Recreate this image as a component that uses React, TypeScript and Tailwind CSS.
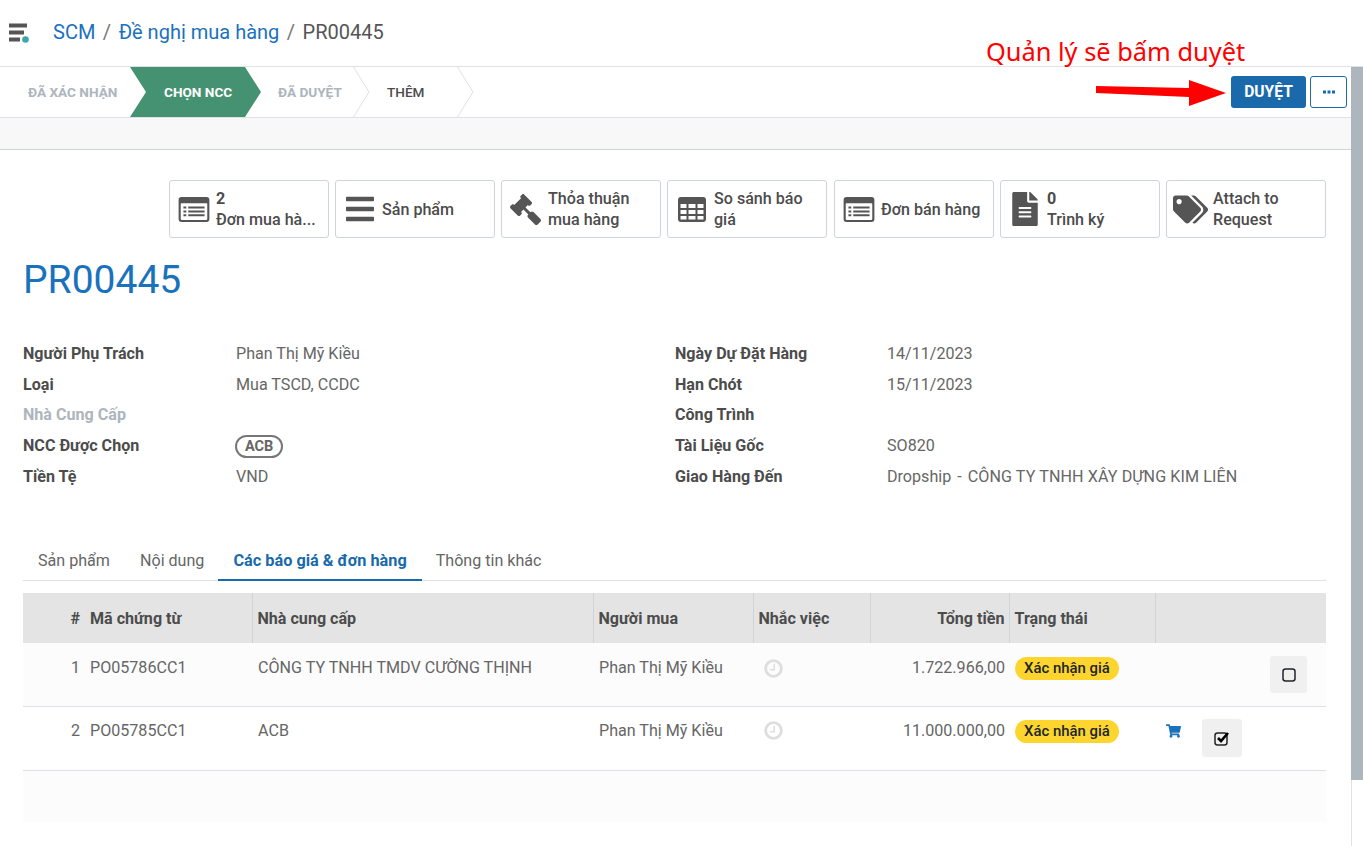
import React from 'react';
import { FaBars, FaGavel, FaShoppingCart, FaFileAlt, FaTags } from 'react-icons/fa';

const ListAltIcon: React.FC = () => (
  <svg viewBox="0 0 32 26" className="w-8 h-[25px] shrink-0">
    <path fillRule="evenodd" fill="#555" d="M3 0h26a3 3 0 0 1 3 3v20a3 3 0 0 1-3 3H3a3 3 0 0 1-3-3V3a3 3 0 0 1 3-3zM3 6.500a.8.8 0 0 0-.8.8V23a.8.8 0 0 0 .8.8h26a.8.8 0 0 0 .8-.8V7.300a.8.8 0 0 0-.8-.8zM5 10h3v2H5zM10 10h17v2H10zM5 14h3v2H5zM10 14h17v2H10zM5 18h3v2H5zM10 18h17v2H10z" />
  </svg>
);

const TableIcon: React.FC = () => (
  <svg viewBox="0 0 28 25" className="w-7 h-[25px] shrink-0">
    <path fillRule="evenodd" fill="#555" d="M3 0h22a3 3 0 0 1 3 3v19a3 3 0 0 1-3 3H3a3 3 0 0 1-3-3V3a3 3 0 0 1 3-3zM2.500 7v4h6V7zM10.500 7v4h7V7zM19.500 7v4h6V7zM2.500 13v4h6v-4zM10.500 13v4h7v-4zM19.500 13v4h6v-4zM2.500 19v3.500h6V19zM10.500 19v3.500h7V19zM19.500 19v3.500h6V19z" />
  </svg>
);

const ClockIcon: React.FC = () => (
  <svg viewBox="0 0 20 20" className="w-[19px] h-[19px]">
    <circle cx="10" cy="10" r="8.300" fill="none" stroke="#dedede" strokeWidth="3" />
    <path d="M10.800 5v6.200H6.500" fill="none" stroke="#dedede" strokeWidth="1.600" />
  </svg>
);

const SquareIcon: React.FC = () => (
  <svg viewBox="0 0 14 14" className="w-[14px] h-[14px]">
    <rect x="1" y="1" width="12" height="12" rx="2.500" fill="none" stroke="#212529" strokeWidth="1.500" />
  </svg>
);

const CheckSquareIcon: React.FC = () => (
  <svg viewBox="0 0 16 15" className="w-[16px] h-[15px]">
    <rect x="1" y="2" width="12" height="12" rx="2.500" fill="none" stroke="#212529" strokeWidth="1.500" />
    <path d="M4 7l3 3 7-8" fill="none" stroke="#000" strokeWidth="2.600" />
  </svg>
);

const statButtons: { icon: React.ReactNode; lines: string[]; count?: boolean }[] = [
  { icon: <ListAltIcon />, lines: ['2', 'Đơn mua hà...'], count: true },
  { icon: <FaBars className="w-7 h-8 text-[#555] shrink-0" />, lines: ['Sản phẩm'] },
  { icon: <FaGavel className="w-[31px] h-[31px] text-[#555] shrink-0 -scale-x-100" />, lines: ['Thỏa thuận', 'mua hàng'] },
  { icon: <TableIcon />, lines: ['So sánh báo', 'giá'] },
  { icon: <ListAltIcon />, lines: ['Đơn bán hàng'] },
  { icon: <FaFileAlt className="w-[26px] h-[34px] text-[#555] shrink-0" />, lines: ['0', 'Trình ký'], count: true },
  { icon: <FaTags className="w-[35px] h-[35px] text-[#555] shrink-0" />, lines: ['Attach to', 'Request'] },
];

const leftFields: [string, React.ReactNode, boolean?][] = [
  ['Người Phụ Trách', 'Phan Thị Mỹ Kiều'],
  ['Loại', 'Mua TSCD, CCDC'],
  ['Nhà Cung Cấp', '', true],
  [
    'NCC Được Chọn',
    <span className="-ml-[1px] inline-flex h-[23px] items-center rounded-full border-2 border-[#777] px-[8px] text-[14.500px] font-bold text-[#666]">ACB</span>,
  ],
  ['Tiền Tệ', 'VND'],
];

const rightFields: [string, React.ReactNode][] = [
  ['Ngày Dự Đặt Hàng', '14/11/2023'],
  ['Hạn Chót', '15/11/2023'],
  ['Công Trình', ''],
  ['Tài Liệu Gốc', 'SO820'],
  [
    'Giao Hàng Đến',
    <>
      Dropship<span className="mx-[6px]">-</span>
      <span className="tracking-[0.1px]">CÔNG TY TNHH XÂY DỰNG KIM LIÊN</span>
    </>,
  ],
];

const FieldRow: React.FC<{ label: string; value: React.ReactNode; muted?: boolean; labelWidth: string }> = ({ label, value, muted, labelWidth }) => (
  <div className="flex h-[30.7px] items-center">
    <div className={`${labelWidth} font-bold ${muted ? 'text-[#adb5bd]' : 'text-[#4c4c4c]'}`}>{label}</div>
    <div className="whitespace-pre text-[#666]">{value}</div>
  </div>
);

const Chip: React.FC = () => (
  <span className="inline-flex h-[23px] items-center rounded-full bg-[#fed52f] px-[9px] text-[14.900px] font-medium text-[#212529]">Xác nhận giá</span>
);

const App: React.FC = () => {
  return (
    <div className="relative w-[1363px] h-[846px] overflow-hidden bg-white font-['Roboto',sans-serif] text-[16.100px] text-[#666]">
      {/* breadcrumb */}
      <header className="flex h-[67px] items-center border-b border-[#dee2e6] pl-[9px]">
        <svg viewBox="0 0 20 20" className="w-5 h-5 -mt-[1px]">
          <rect x="0" y="0.500" width="18" height="4" fill="#555" />
          <rect x="0" y="7.500" width="15" height="4" fill="#555" />
          <rect x="0" y="14.500" width="11" height="4" fill="#555" />
          <circle cx="16.500" cy="16.500" r="3.300" fill="#38a8ab" />
        </svg>
        <nav className="ml-[24px] flex items-center text-[20px] -mt-[2px]">
          <span className="text-[#1a72bd]">SCM</span>
          <span className="mx-[7.500px] text-[#777]">/</span>
          <span className="text-[#1a72bd]">Đề nghị mua hàng</span>
          <span className="mx-[7.500px] text-[#777]">/</span>
          <span className="text-[#555]">PR00445</span>
        </nav>
      </header>

      <div className="flex h-[779px]">
        <div className="w-[1351px] shrink-0">
          {/* status bar */}
          <div className="flex h-[51px] items-center justify-between border-b border-[#dee2e6] pr-[4px]">
            <div className="relative flex h-[50px] text-[13.600px] font-bold">
              <div className="flex w-[130px] items-center pl-[28px] pt-[1px] text-[#adb5bd]">ĐÃ XÁC NHẬN</div>
              <div className="relative flex w-[131px] items-center pl-[34px] pt-[1px] text-white">
                <svg viewBox="0 0 131 50" className="absolute inset-0 w-[131px] h-[50px]">
                  <polygon points="0,0 115,0 131,25 115,50 0,50 16,25" fill="#459272" />
                </svg>
                <span className="relative">CHỌN NCC</span>
              </div>
              <div className="relative flex w-[109px] items-center pl-[17px] pt-[1px] text-[#adb5bd]">
                ĐÃ DUYỆT
                <svg viewBox="0 0 17 50" className="absolute right-0 top-0 w-[17px] h-[50px]">
                  <polyline points="0.500,0 16,25 0.500,50" fill="none" stroke="#dee2e6" />
                </svg>
              </div>
              <div className="relative flex w-[104px] items-center pl-[17px] pt-[1px] font-medium text-[#4c4c4c]">
                THÊM
                <svg viewBox="0 0 17 50" className="absolute right-0 top-0 w-[17px] h-[50px]">
                  <polyline points="0.500,0 16,25 0.500,50" fill="none" stroke="#dee2e6" />
                </svg>
              </div>
            </div>
            <div className="flex items-center gap-[4px]">
              <button className="flex h-[32px] w-[75px] items-center justify-center rounded-[3px] bg-[#1a6aab] pt-[1px] text-[15.600px] font-bold text-white">DUYỆT</button>
              <button className="flex h-[32px] w-[37px] items-center justify-center rounded-[3px] border border-[#1a6aab] text-[#1a6aab]">
                <svg viewBox="0 0 12 4" className="w-[12px] h-[4px]">
                  <rect x="0" y="0.500" width="3" height="3" fill="currentColor" />
                  <rect x="4.500" y="0.500" width="3" height="3" fill="currentColor" />
                  <rect x="9" y="0.500" width="3" height="3" fill="currentColor" />
                </svg>
              </button>
            </div>
          </div>
          <div className="h-[32px] border-b border-[#ced4da] bg-[#f8f8f8]" />

          <main className="pl-[23px] pr-[25px]">
            {/* stat buttons */}
            <div className="mt-[30px] flex justify-end gap-[6px]">
              {statButtons.map((b, i) => (
                <div key={i} className={`flex h-[58px] w-[160px] items-center gap-[6px] rounded-[3px] border border-[#ced4da] pl-[7px] leading-[21px] text-[#4c4c4c] ${i === 3 ? 'mr-[1px]' : ''}`}>
                  <span className="flex w-[33px] shrink-0 justify-center">{b.icon}</span>
                  <div className="font-medium whitespace-nowrap">
                    {b.lines.map((l, j) => (
                      <div key={j} className={b.count && j === 0 ? 'font-bold' : ''}>{l}</div>
                    ))}
                  </div>
                </div>
              ))}
            </div>

            <h1 className="mt-[18px] h-[48px] text-[39px] leading-[48px] text-[#1a72bd]">PR00445</h1>

            {/* form */}
            <div className="mt-[34.800px] mb-[48.200px] grid grid-cols-[652px_1fr]">
              <div>
                {leftFields.map(([label, value, muted]) => (
                  <FieldRow key={label} label={label} value={value} muted={muted} labelWidth="w-[213px]" />
                ))}
              </div>
              <div>
                {rightFields.map(([label, value]) => (
                  <FieldRow key={label} label={label} value={value} labelWidth="w-[212px]" />
                ))}
              </div>
            </div>

            {/* tabs */}
            <div className="flex h-[41px] border-b border-[#dee2e6]">
              <div className="flex h-[41px] items-center px-[15px] pt-[1px]">Sản phẩm</div>
              <div className="flex h-[41px] items-center pl-[15px] pr-[14px] pt-[1px]">Nội dung</div>
              <div className="flex h-[41px] items-center border-b-2 border-[#1a6aab] px-[15px] pt-[2px] text-[16.300px] font-bold text-[#1a6aab]">Các báo giá &amp; đơn hàng</div>
              <div className="flex h-[41px] items-center pl-[14px] pt-[1px]">Thông tin khác</div>
            </div>

            {/* table */}
            <table className="mt-[12px] w-full table-fixed border-collapse">
              <colgroup>
                <col className="w-[62px]" />
                <col className="w-[167px]" />
                <col className="w-[341px]" />
                <col className="w-[160px]" />
                <col className="w-[117px]" />
                <col className="w-[139px]" />
                <col className="w-[146px]" />
                <col />
              </colgroup>
              <thead>
                <tr className="h-[50px] bg-[#e4e4e4] text-left font-bold text-[#4c4c4c]">
                  <th className="pr-[5px] pt-[1px] text-right font-bold">#</th>
                  <th className="border-r border-[#ced4da] pl-[5px] pt-[1px] font-bold">Mã chứng từ</th>
                  <th className="border-r border-[#ced4da] pl-[5px] pt-[1px] font-bold">Nhà cung cấp</th>
                  <th className="border-r border-[#ced4da] pl-[5px] pt-[1px] font-bold">Người mua</th>
                  <th className="border-r border-[#ced4da] pl-[5px] pt-[1px] font-bold">Nhắc việc</th>
                  <th className="border-r border-[#ced4da] pr-[4px] pt-[1px] text-right font-bold">Tổng tiền</th>
                  <th className="border-r border-[#ced4da] pl-[5px] pt-[1px] font-bold">Trạng thái</th>
                  <th />
                </tr>
              </thead>
              <tbody>
                <tr className="h-[63px] border-b border-[#dee2e6] bg-[#fcfcfc]">
                  <td className="pr-[5px] pb-[13px] text-right">1</td>
                  <td className="pl-[5px] pb-[13px]">PO05786CC1</td>
                  <td className="pl-[6px] pb-[13px] whitespace-nowrap">CÔNG TY TNHH TMDV CƯỜNG THỊNH</td>
                  <td className="pl-[6px] pb-[13px]">Phan Thị Mỹ Kiều</td>
                  <td className="pl-[11px] pb-[13px]"><ClockIcon /></td>
                  <td className="pr-[4px] pb-[13px] text-right">1.722.966,00</td>
                  <td className="pl-[6px] pb-[13px]"><Chip /></td>
                  <td>
                    <div className="ml-auto mr-[19px] flex h-[37px] w-[37px] items-center justify-center rounded-[3px] bg-[#f0f0f0]">
                      <SquareIcon />
                    </div>
                  </td>
                </tr>
                <tr className="h-[64px] border-b border-[#dee2e6] bg-white">
                  <td className="pr-[5px] pb-[15px] text-right">2</td>
                  <td className="pl-[5px] pb-[15px]">PO05785CC1</td>
                  <td className="pl-[6px] pb-[15px]">ACB</td>
                  <td className="pl-[6px] pb-[15px]">Phan Thị Mỹ Kiều</td>
                  <td className="pl-[11px] pb-[15px]"><ClockIcon /></td>
                  <td className="pr-[4px] pb-[15px] text-right">11.000.000,00</td>
                  <td className="pl-[6px] pb-[15px]"><Chip /></td>
                  <td>
                    <div className="flex items-start pl-[11px]">
                      <FaShoppingCart className="mt-[5px] w-[15px] h-[14px] text-[#1a72bd]" />
                      <div className="ml-[21px] flex h-[38px] w-[40px] items-center justify-center rounded-[3px] bg-[#f0f0f0]">
                        <CheckSquareIcon />
                      </div>
                    </div>
                  </td>
                </tr>
                <tr className="h-[52px] bg-[#fcfcfc]">
                  <td colSpan={8} />
                </tr>
              </tbody>
            </table>
          </main>
        </div>

        {/* scrollbar */}
        <div className="flex-1 border-l border-[#dee2e6]">
          <div className="h-[713px] bg-[#adb5bd] -ml-[1px]" />
        </div>
      </div>

      {/* annotation */}
      <div className="absolute left-[986px] top-[33px] font-['Noto_Sans','DejaVu_Sans',sans-serif] text-[25.400px] leading-[36px] text-[#ff0000] whitespace-nowrap">Quản lý sẽ bấm duyệt</div>
      <svg viewBox="0 0 130 26" className="absolute left-[1096px] top-[80px] w-[130px] h-[26px]">
        <polygon points="0,6 93,8 93,0 130,13 93,26 93,17 0,13" fill="#ff0000" />
      </svg>
    </div>
  );
};

export default App;
